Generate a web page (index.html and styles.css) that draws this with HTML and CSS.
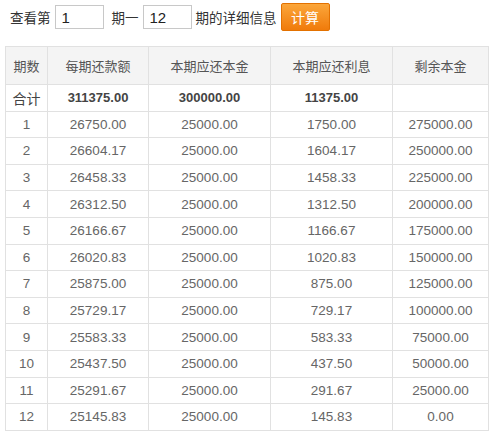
FILE: index.html
```html
<!DOCTYPE html>
<html lang="zh-CN">
<head>
<meta charset="utf-8">
<link rel="stylesheet" href="styles.css">
</head>
<body>
<div class="toolbar">
  <span class="label">查看第</span>
  <input class="num num-from" type="text" value="1">
  <span class="label">期一</span>
  <input class="num num-to" type="text" value="12">
  <span class="label">期的详细信息</span>
  <button class="calc" type="button">计算</button>
</div>
<table class="plan">
  <colgroup>
    <col class="c1"><col class="c2"><col class="c3"><col class="c4"><col class="c5">
  </colgroup>
  <thead>
    <tr><th>期数</th><th>每期还款额</th><th>本期应还本金</th><th>本期应还利息</th><th>剩余本金</th></tr>
  </thead>
  <tbody>
    <tr class="total"><td class="cn">合计</td><td>311375.00</td><td>300000.00</td><td>11375.00</td><td></td></tr>
    <tr><td>1</td><td>26750.00</td><td>25000.00</td><td>1750.00</td><td>275000.00</td></tr>
    <tr><td>2</td><td>26604.17</td><td>25000.00</td><td>1604.17</td><td>250000.00</td></tr>
    <tr><td>3</td><td>26458.33</td><td>25000.00</td><td>1458.33</td><td>225000.00</td></tr>
    <tr><td>4</td><td>26312.50</td><td>25000.00</td><td>1312.50</td><td>200000.00</td></tr>
    <tr><td>5</td><td>26166.67</td><td>25000.00</td><td>1166.67</td><td>175000.00</td></tr>
    <tr><td>6</td><td>26020.83</td><td>25000.00</td><td>1020.83</td><td>150000.00</td></tr>
    <tr><td>7</td><td>25875.00</td><td>25000.00</td><td>875.00</td><td>125000.00</td></tr>
    <tr><td>8</td><td>25729.17</td><td>25000.00</td><td>729.17</td><td>100000.00</td></tr>
    <tr><td>9</td><td>25583.33</td><td>25000.00</td><td>583.33</td><td>75000.00</td></tr>
    <tr><td>10</td><td>25437.50</td><td>25000.00</td><td>437.50</td><td>50000.00</td></tr>
    <tr><td>11</td><td>25291.67</td><td>25000.00</td><td>291.67</td><td>25000.00</td></tr>
    <tr><td>12</td><td>25145.83</td><td>25000.00</td><td>145.83</td><td>0.00</td></tr>
  </tbody>
</table>
</body>
</html>
```
FILE: styles.css
```css
html, body {
  margin: 0;
  padding: 0;
  background: #fff;
}
body {
  font-family: "Liberation Sans", "Noto Sans CJK SC", sans-serif;
  color: #666;
  font-size: 13px;
}
.toolbar {
  display: flex;
  align-items: center;
  height: 34px;
  padding-left: 10px;
  color: #333;
  font-size: 13.5px;
}
.label {
  margin-right: 4px;
}
.num {
  box-sizing: border-box;
  width: 49px;
  height: 24px;
  margin: 0;
  padding: 0 6px;
  border: 1px solid #c8c8c8;
  font-family: "Liberation Sans", sans-serif;
  font-size: 15px;
  color: #222;
  outline: none;
}
.num-from {
  margin-right: 8px;
}
.num-to {
  margin-right: 4px;
}
.calc {
  box-sizing: border-box;
  width: 49px;
  height: 28px;
  margin-left: 0;
  border: 1px solid #e37100;
  border-radius: 2px;
  background: linear-gradient(#fba63a, #f07b0b);
  color: #fff;
  font-family: "Noto Sans CJK SC", sans-serif;
  font-size: 14px;
  padding: 0;
}
.plan {
  margin: 12px 0 0 5px;
  border-collapse: collapse;
  table-layout: fixed;
  width: 483px;
}
.c1 { width: 42px; }
.c2 { width: 101px; }
.c3 { width: 122px; }
.c4 { width: 122px; }
.c5 { width: 96px; }
.plan th, .plan td {
  border: 1px solid #e1e1e1;
  text-align: center;
  padding: 0;
  white-space: nowrap;
}
.plan th {
  height: 37px;
  background: #f4f4f4;
  font-weight: normal;
  font-size: 13px;
  color: #555;
}
.plan td {
  height: 25.6px;
  font-size: 13.5px;
}
.total td {
  font-weight: bold;
  font-size: 13px;
  color: #444;
}
.total td.cn {
  font-weight: normal;
  font-size: 14px;
}
```
